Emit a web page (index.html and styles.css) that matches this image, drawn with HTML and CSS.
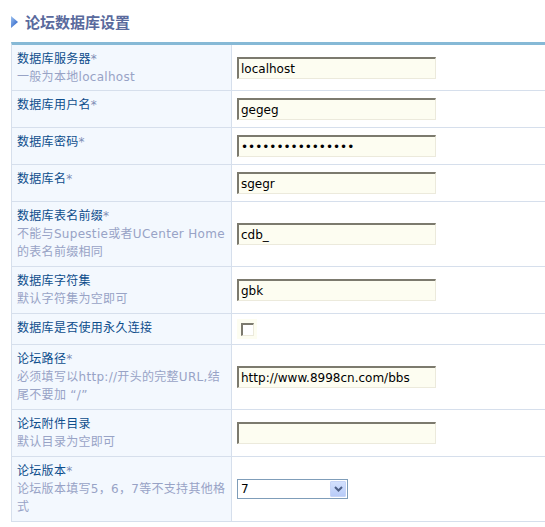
FILE: index.html
```html
<!DOCTYPE html>
<html lang="zh-CN">
<head>
<meta charset="utf-8">
<title>论坛数据库设置</title>
<link rel="stylesheet" href="styles.css">
</head>
<body>
<div class="page">
  <h3 class="title">
    <svg class="title-icon" width="7" height="12" viewBox="0 0 7 12">
      <defs>
        <linearGradient id="tg" x1="0" y1="0" x2="1" y2="1">
          <stop offset="0" stop-color="#9fc3f0"/>
          <stop offset="1" stop-color="#1d57c4"/>
        </linearGradient>
      </defs>
      <polygon points="0,0 7,6 0,12" fill="url(#tg)"/>
    </svg>
    <span>论坛数据库设置</span>
  </h3>
  <div class="form">
    <div class="row">
      <div class="label"><div class="name">数据库服务器<span class="req">*</span></div><div class="hint">一般为本地localhost</div></div>
      <div class="field"><input class="text" type="text" value="localhost"></div>
    </div>
    <div class="row">
      <div class="label"><div class="name">数据库用户名<span class="req">*</span></div></div>
      <div class="field"><input class="text" type="text" value="gegeg"></div>
    </div>
    <div class="row">
      <div class="label"><div class="name">数据库密码<span class="req">*</span></div></div>
      <div class="field"><input class="text" type="password" value="aaaaaaaaaaaaaaaa"></div>
    </div>
    <div class="row">
      <div class="label"><div class="name">数据库名<span class="req">*</span></div></div>
      <div class="field"><input class="text" type="text" value="sgegr"></div>
    </div>
    <div class="row">
      <div class="label"><div class="name">数据库表名前缀<span class="req">*</span></div><div class="hint">不能与Supestie或者UCenter Home的表名前缀相同</div></div>
      <div class="field"><input class="text" type="text" value="cdb_"></div>
    </div>
    <div class="row">
      <div class="label"><div class="name">数据库字符集</div><div class="hint">默认字符集为空即可</div></div>
      <div class="field"><input class="text" type="text" value="gbk"></div>
    </div>
    <div class="row">
      <div class="label"><div class="name">数据库是否使用永久连接</div></div>
      <div class="field"><span class="checkwrap"><input class="check" type="checkbox"></span></div>
    </div>
    <div class="row">
      <div class="label"><div class="name">论坛路径<span class="req">*</span></div><div class="hint">必须填写以http://开头的完整URL,结尾不要加 “/”</div></div>
      <div class="field"><input class="text" type="text" value="http://www.8998cn.com/bbs"></div>
    </div>
    <div class="row">
      <div class="label"><div class="name">论坛附件目录</div><div class="hint">默认目录为空即可</div></div>
      <div class="field"><input class="text" type="text" value=""></div>
    </div>
    <div class="row">
      <div class="label"><div class="name">论坛版本<span class="req">*</span></div><div class="hint">论坛版本填写5，6，7等不支持其他格式</div></div>
      <div class="field">
        <div class="select">
          <span class="select-value">7</span>
          <span class="select-btn">
            <svg width="9" height="6" viewBox="0 0 9 6"><path d="M1 1 L4.5 4.5 L8 1" fill="none" stroke="#4d5f86" stroke-width="2"/></svg>
          </span>
        </div>
      </div>
    </div>
  </div>
</div>
</body>
</html>
```

FILE: styles.css
```css
html, body {
  margin: 0;
  padding: 0;
  background: #ffffff;
}

body {
  font-family: "DejaVu Sans", "Noto Sans CJK SC", sans-serif;
  font-size: 12px;
  color: #0d4d8c;
}

.page {
  padding-left: 11px;
  overflow: hidden;
  width: 534px;
}

.title {
  margin: 0;
  height: 42px;
  display: flex;
  align-items: center;
  gap: 7px;
  font-size: 15px;
  font-weight: bold;
  color: #5a6a9d;
  font-family: "Noto Sans CJK SC", sans-serif;
}

.title-icon {
  display: block;
  margin-top: 1px;
}

.form {
  border-top: 3px solid #86b9d6;
  border-left: 1px solid #d6dfec;
  width: 560px;
}

.row {
  display: grid;
  grid-template-columns: 220px 1fr;
  border-bottom: 1px solid #d6dfec;
}

.row:first-child .label {
  padding-top: 5px;
  padding-bottom: 4px;
}

.label {
  background: #f3f8fe;
  border-right: 1px solid #d6dfec;
  padding: 5px;
  line-height: 18px;
  letter-spacing: 0.3px;
}

.name {
  color: #0d4d8c;
}

.req {
  color: #7d8db5;
}

.hint {
  color: #98a3c6;
}

.field {
  display: flex;
  align-items: center;
  padding: 5px 5px;
}

.text {
  box-sizing: border-box;
  width: 199px;
  height: 22px;
  margin: 2px 0;
  padding: 1px 2px 0;
  border-style: solid;
  border-width: 2px 1px 1px 2px;
  border-color: #7c7a6e #eceadc #eceadc #7c7a6e;
  background: #fdfdf1;
  font-family: "DejaVu Sans", sans-serif;
  font-size: 12px;
  color: #000000;
  outline: none;
}

.checkwrap {
  display: flex;
  align-items: center;
  justify-content: center;
  width: 20px;
  height: 20px;
  background: #fdfdf1;
}

.check {
  appearance: none;
  -webkit-appearance: none;
  box-sizing: border-box;
  width: 13px;
  height: 13px;
  margin: 0;
  border-style: solid;
  border-width: 2px 1px 1px 2px;
  border-color: #7c7a6e #eceadc #eceadc #7c7a6e;
  background: #ffffff;
}

.select {
  box-sizing: border-box;
  width: 111px;
  height: 20px;
  margin: 3px 0;
  border: 1px solid #7f9db9;
  background: #ffffff;
  display: flex;
  align-items: center;
  justify-content: space-between;
  padding: 0 1px 0 3px;
}

.select-value {
  color: #000000;
  font-size: 12px;
}

.select-btn {
  box-sizing: border-box;
  width: 16px;
  height: 16px;
  display: flex;
  align-items: center;
  justify-content: center;
  background: linear-gradient(#d3e0fd, #b8cbf8);
  border: 1px solid #c6d4f7;
  border-radius: 1px;
}

.select-btn svg {
  display: block;
}
```
